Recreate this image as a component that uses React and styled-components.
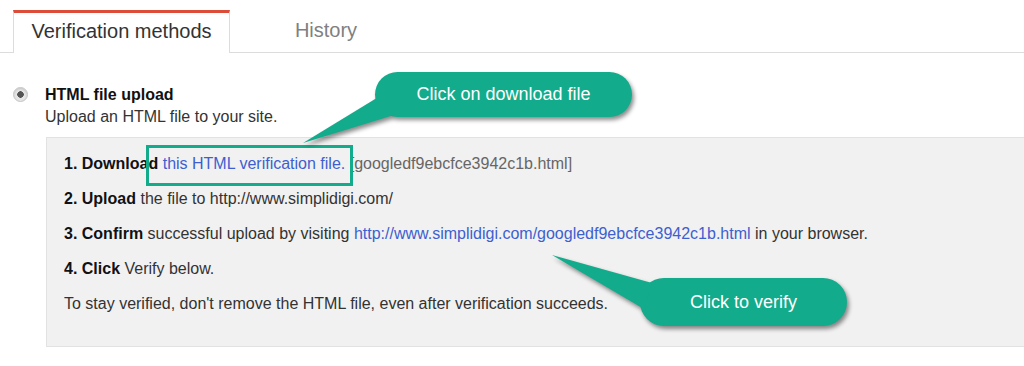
import React from "react";
import styled, { createGlobalStyle } from "styled-components";

const teal = "#12ab8b";

const GlobalStyle = createGlobalStyle`
  html, body {
    margin: 0;
    padding: 0;
    background: #fff;
  }
  body {
    font-family: "Liberation Sans", Arial, sans-serif;
    color: #222;
  }
`;

const Page = styled.div`
  position: relative;
  width: 1024px;
  height: 366px;
  overflow: hidden;
  background: #fff;
`;

const TabBar = styled.div`
  display: flex;
  padding: 10px 0 0 13px;
  border-bottom: 1px solid #dcdcdc;
  height: 42px;
`;

const Tab = styled.div`
  width: ${p => p.width}px;
  display: flex;
  align-items: center;
  justify-content: center;
  font-size: 20px;
  color: ${p => (p.active ? "#333" : "#808080")};
  background: #fff;
  box-sizing: border-box;
  border-top: 3px solid ${p => (p.active ? "#dd4b39" : "transparent")};
  border-left: 1px solid ${p => (p.active ? "#dcdcdc" : "transparent")};
  border-right: 1px solid ${p => (p.active ? "#dcdcdc" : "transparent")};
  margin-bottom: ${p => (p.active ? "-1px" : "0")};
  padding-bottom: 4px;
`;

const Method = styled.div`
  display: flex;
  gap: 17px;
  margin: 31px 0 0 13px;
`;

const Radio = styled.span`
  width: 15px;
  height: 15px;
  margin-top: 3px;
  border-radius: 50%;
  box-sizing: border-box;
  background: radial-gradient(circle, #555 0 3px, #e6e6e6 3.5px);
  border: 1px solid #c4c4c4;
  box-shadow: inset 0 1px 2px rgba(0, 0, 0, 0.15);
  flex-shrink: 0;
`;

const MethodText = styled.div`
  line-height: 22px;
`;

const Title = styled.div`
  font-size: 16px;
  font-weight: bold;
  color: #111;
`;

const Subtitle = styled.div`
  font-size: 16px;
  color: #333;
`;

const Steps = styled.div`
  margin: 9px 0 0 46px;
  height: 210px;
  box-sizing: border-box;
  background: #f1f1f1;
  border: 1px solid #e2e2e2;
  border-right: none;
  padding: 16px 0 0 17px;
  display: flex;
  flex-direction: column;
  gap: 16px;
`;

const Step = styled.div`
  font-size: 16px;
  line-height: 19px;
  color: #333;
  white-space: nowrap;
  b {
    color: #111;
  }
`;

const Link = styled.a`
  color: #3d5fd0;
  text-decoration: none;
`;

const Muted = styled.span`
  color: #666;
`;

const Highlight = styled.div`
  position: absolute;
  left: 146px;
  top: 145px;
  width: 207px;
  height: 41px;
  box-sizing: border-box;
  border: 3px solid ${teal};
`;

const Bubbles = styled.svg`
  position: absolute;
  left: 0;
  top: 0;
  filter: drop-shadow(2px 3px 2px rgba(0, 0, 0, 0.45));
  pointer-events: none;
`;

const BubbleLabel = styled.div`
  position: absolute;
  left: ${p => p.x}px;
  top: ${p => p.y}px;
  width: ${p => p.w}px;
  height: ${p => p.h}px;
  display: flex;
  align-items: center;
  justify-content: center;
  color: #fff;
  font-size: 18px;
`;

export default function App() {
  return (
    <Page>
      <GlobalStyle />
      <TabBar>
        <Tab active width={217}>Verification methods</Tab>
        <Tab width={192}>History</Tab>
      </TabBar>

      <Method>
        <Radio />
        <MethodText>
          <Title>HTML file upload</Title>
          <Subtitle>Upload an HTML file to your site.</Subtitle>
        </MethodText>
      </Method>

      <Steps>
        <Step>
          <b>1. Download</b> <Link href="#">this HTML verification file.</Link>{" "}
          <Muted>[googledf9ebcfce3942c1b.html]</Muted>
        </Step>
        <Step>
          <b>2. Upload</b> the file to http://www.simplidigi.com/
        </Step>
        <Step>
          <b>3. Confirm</b> successful upload by visiting{" "}
          <Link href="#">http://www.simplidigi.com/googledf9ebcfce3942c1b.html</Link> in your browser.
        </Step>
        <Step>
          <b>4. Click</b> Verify below.
        </Step>
        <Step>To stay verified, don't remove the HTML file, even after verification succeeds.</Step>
      </Steps>

      <Highlight />

      <Bubbles width="1024" height="366" viewBox="0 0 1024 366">
        <g fill={teal}>
          <rect x="375" y="72" width="257" height="45" rx="22.5" />
          <polygon points="303,143 380,96 394,115" />
          <rect x="640" y="278" width="207" height="48" rx="24" />
          <polygon points="552,255 652,283 644,309" />
        </g>
      </Bubbles>
      <BubbleLabel x={375} y={72} w={257} h={45}>Click on download file</BubbleLabel>
      <BubbleLabel x={640} y={278} w={207} h={48}>Click to verify</BubbleLabel>
    </Page>
  );
}
